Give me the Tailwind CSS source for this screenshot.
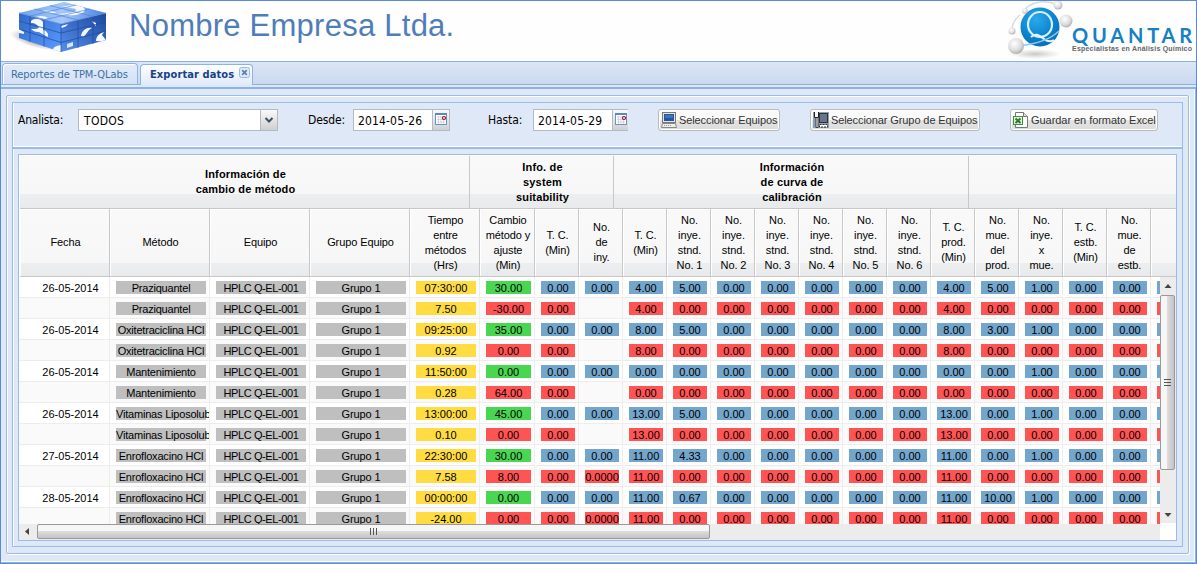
<!DOCTYPE html>
<html lang="es">
<head>
<meta charset="utf-8">
<title>Exportar datos</title>
<script src="https://cdn.jsdelivr.net/npm/@tailwindcss/browser@4"></script>
</head>
<body class="w-[1197px] h-[564px] overflow-hidden font-['Liberation_Sans',Arial,sans-serif] text-[11px] text-black">
<div class="flex flex-col w-full h-full border border-[#5a8bd6] bg-[#dfe8f6]">
  <header class="h-[60px] shrink-0 bg-[#fefefe] flex justify-between">
    <div class="flex">
      <svg class="w-[110px] h-[60px] shrink-0" viewBox="1 1 110 60">
        <defs>
          <linearGradient id="lf" x1="0" y1="0" x2="1" y2="1"><stop offset="0" stop-color="#2f69c8"/><stop offset="1" stop-color="#5b9aff"/></linearGradient>
          <linearGradient id="rf" x1="0" y1="1" x2="1" y2="0"><stop offset="0" stop-color="#558fee"/><stop offset="1" stop-color="#1c479d"/></linearGradient>
          <linearGradient id="tf" x1="0" y1="0" x2="1" y2="0"><stop offset="0" stop-color="#6ea2ee"/><stop offset=".5" stop-color="#a5c8fa"/><stop offset="1" stop-color="#4b83dd"/></linearGradient>
          <radialGradient id="sh"><stop offset="0" stop-color="#555" stop-opacity=".8"/><stop offset="1" stop-color="#777" stop-opacity="0"/></radialGradient>
          <clipPath id="cl"><path d="M19 13L61 24V52L19 38z"/></clipPath>
          <clipPath id="cr"><path d="M61 24L106 13V40L61 52z"/></clipPath>
          <clipPath id="ct"><path d="M19 13L64 2L106 13L61 24z"/></clipPath>
        </defs>
        <ellipse cx="37" cy="40" rx="28" ry="8" fill="url(#sh)" transform="rotate(14 37 40)"/>
        <path d="M19 13L61 24V52L19 38z" fill="url(#lf)"/>
        <path d="M61 24L106 13V40L61 52z" fill="url(#rf)"/>
        <path d="M19 13L64 2L106 13L61 24z" fill="url(#tf)"/>
        <g clip-path="url(#cl)" fill="#f4f9ff"><path d="M31 21c3-3 9-3 12 1v8c2 0 4 2 5 4v3l-4-2c-2-1-4-3-6-3c-3 0-5-1-7-3c3 0 6 0 8-1c-1-3-4-5-8-5z"/><path d="M19 29l5 3v2l-5-1zM53 50c0-3 3-4 8-5v8z"/></g>
        <g clip-path="url(#cr)" fill="#f4f9ff"><path d="M81 36c1-6 6-9 11-8c-4 2-4 4-6 6c-1 2-3 3-5 2zM96 41c0-5 4-8 8-9l-2 3l4 5v2zM92 21l4 2v3l-3-3z"/><path d="M61 26l7-2c-1 2-3 3-7 4z"/><path d="M67 44l6-2v4l-6 2z" fill="#d6e7ff"/></g>
        <g clip-path="url(#ct)" fill="#f4f9ff"><path d="M62 7c8-3 23-2 23 3c-2 6-16 6-27 4c8-1 17-1 18-4c0-2-6-2-14-3zM42 11c5-1 12 0 14 2l-9 0z"/><path d="M36 17c5-2 9-1 12 1l-3 1z"/></g>
        <g fill="none" stroke="#1c4a9c" stroke-width=".7"><path d="M30 16V42M44 20V46.500M61 24V52M78 20V48M93 16.500V44M19 21L61 33L106 22M19 29L61 42.500L106 31"/></g>
        <g fill="none" stroke="#5387d8" stroke-width=".7"><path d="M19 13L61 24L106 13M30 16L76 5M44 20L90 9M34 9L78 20M50 5.500L93 16.500"/></g>
      </svg>
      <h1 class="pl-[18px] pt-[7px] text-[31px] leading-[36px] tracking-[0.25px] text-[#4e7dba] whitespace-nowrap">Nombre Empresa Ltda.</h1>
    </div>
    <div class="flex relative w-[194px]">
      <svg class="w-[80px] h-[60px] shrink-0" viewBox="1002 1 80 60">
        <defs>
          <radialGradient id="ball" cx=".4" cy=".3" r=".75"><stop offset="0" stop-color="#2ba9ea"/><stop offset=".6" stop-color="#0c85d0"/><stop offset="1" stop-color="#0a6bb5"/></radialGradient>
          <radialGradient id="gb" cx=".4" cy=".35" r=".7"><stop offset="0" stop-color="#fff"/><stop offset=".6" stop-color="#ddd"/><stop offset="1" stop-color="#aaa"/></radialGradient>
        </defs>
        <ellipse cx="1035" cy="54" rx="26" ry="5" fill="url(#sh)" opacity=".4"/>
        <path d="M1025 9C1036-1 1050 1 1057 5M1012 30c0-6 3-11 8-15" fill="none" stroke="#d6dadd" stroke-width="1.500"/>
        <circle cx="1066" cy="21" r="6.500" fill="url(#gb)"/>
        <circle cx="1040" cy="27" r="19.500" fill="url(#ball)"/>
        <ellipse cx="1040" cy="24.500" rx="12" ry="12.500" fill="none" stroke="#d7f0ff" stroke-width="2.200"/>
        <path d="M1031 37c5-5 9-1 13 2c4 3 7 3 10 1" fill="none" stroke="#e4f4fd" stroke-width="2"/>
        <path d="M1019 46c17-2 32-7 40-15" fill="none" stroke="#8fc9ec" stroke-width="1.500"/>
        <circle cx="1016" cy="46" r="8" fill="url(#gb)"/><circle cx="1012" cy="31" r="3.500" fill="url(#gb)"/><circle cx="1025" cy="11" r="2.800" fill="url(#gb)"/><circle cx="1058" cy="5" r="4.500" fill="url(#gb)"/>
      </svg>
      <div class="absolute left-[70px] top-[24px] w-[122px] whitespace-nowrap">
        <div class="font-['Lato',sans-serif] font-bold text-[20px] leading-[20px] tracking-[3.8px] text-[#1580c4]">QUANTAR</div>
        <div class="text-[7px] leading-[8px] font-bold tracking-[0.22px] text-[#666]">Especialistas en Análisis Químico</div>
      </div>
    </div>
  </header>

  <nav class="h-[24px] shrink-0 border-t border-b border-t-[#8db2e6] border-b-[#8db2e6] bg-linear-to-b from-[#dbe5f5] to-[#cbd9ef] flex items-end pl-px gap-[2px] font-['DejaVu_Sans_Condensed','DejaVu_Sans',sans-serif] font-stretch-condensed">
    <div class="w-[136px] h-[21px] border border-b-0 border-[#8db2e3] rounded-t-[4px] bg-linear-to-b from-[#e2ecfa] to-[#d3e1f5] shadow-[inset_1px_1px_0_#fff] text-[#416da3] pl-[8px] leading-[21px] text-[11px] tracking-[-0.06px] whitespace-nowrap">Reportes de TPM-QLabs</div>
    <div class="relative w-[113px] h-[21px] -mb-px border border-b-0 border-[#8db2e3] rounded-t-[4px] bg-linear-to-b from-white to-[#e0eaf8] text-[#15428b] font-bold pl-[9px] leading-[20px] text-[11px] tracking-[0.1px] whitespace-nowrap">Exportar datos
      <svg class="absolute right-[2px] top-[2px] w-[11px] h-[11px]" viewBox="0 0 11 11"><rect x=".5" y=".5" width="10" height="10" rx="2" fill="#dfeafa" stroke="#9ab8e0"/><path d="M3.200 3.200l4.600 4.600M7.800 3.200l-4.600 4.600" stroke="#5f80b0" stroke-width="1.700"/></svg>
    </div>
  </nav>
  <div class="h-[4px] shrink-0 border-b-2 border-[#8db2e6] bg-[#dfe8f6]"></div>

  <main class="flex-1 min-h-0 pt-[6px] pb-[8px] pl-[5px] pr-[6px] border-r border-b border-[#8db2e6] flex shadow-[inset_-1px_-1px_0_#fff]">
    <section class="flex-1 flex flex-col min-w-0 border border-[#99bce8] rounded-[2px] shadow-[inset_1px_1px_0_#fff,1px_1px_0_#fff] pt-[6px] pl-[5px] pr-[5px] pb-[6px]">
      <form class="h-[45px] shrink-0 border border-[#99bce8] border-b-0 shadow-[inset_0_-1px_0_#fff,inset_1px_0_0_#fff] flex pt-[6px] pl-[5px] font-['DejaVu_Sans_Condensed','DejaVu_Sans',sans-serif] font-stretch-condensed text-[12px]">
        <label class="w-[60px] leading-[22px] tracking-[-0.2px]">Analista:</label>
        <div class="w-[200px] h-[22px] border border-[#b5b8c8] bg-white flex justify-between leading-[22px] pl-[5px] tracking-[0.3px]">TODOS
          <svg class="w-[17px] h-[20px] border-l border-[#b5b8c8] bg-linear-to-b from-[#fafafa] to-[#cfcfcf]" viewBox="0 0 16 20"><path d="M4.500 8l3.500 3.500l3.500-3.500" fill="none" stroke="#3e4e6c" stroke-width="2"/></svg>
        </div>
        <label class="ml-[30px] w-[45px] leading-[22px] tracking-[-0.1px]">Desde:</label>
        <div class="w-[97px] h-[22px] border border-[#b5b8c8] bg-white flex justify-between leading-[22px] pl-[4px] tracking-[0.15px]">2014-05-26
          <svg class="w-[17px] h-[20px] border-l border-[#b5b8c8] bg-linear-to-b from-[#fafafa] to-[#cfcfcf]" viewBox="0 0 16 20"><rect x="2.500" y="3.500" width="11" height="11" fill="#fff" stroke="#6b93c6"/><path d="M2 4h12" stroke="#5d87bd" stroke-width="2"/><path d="M4 7h8M4 9.500h8M4 12h8M5.500 6v8M8 6v8M10.500 6v8" stroke="#c9d0da" stroke-width=".8"/><circle cx="11" cy="8" r="1.500" fill="#fff" stroke="#8e1326" stroke-width="1.200"/></svg>
        </div>
        <label class="ml-[38px] w-[45px] leading-[22px] tracking-[-0.1px]">Hasta:</label>
        <div class="w-[95px] h-[22px] border border-r-0 border-[#b5b8c8] bg-white flex justify-between leading-[22px] pl-[4px] tracking-[0.15px]">2014-05-29
          <svg class="w-[16px] h-[20px] border-l border-[#b5b8c8] bg-linear-to-b from-[#fafafa] to-[#cfcfcf]" viewBox="0 0 15 20"><rect x="2.500" y="3.500" width="11" height="11" fill="#fff" stroke="#6b93c6"/><path d="M2 4h12" stroke="#5d87bd" stroke-width="2"/><path d="M4 7h8M4 9.500h8M4 12h8M5.500 6v8M8 6v8M10.500 6v8" stroke="#c9d0da" stroke-width=".8"/><circle cx="11" cy="8" r="1.500" fill="#fff" stroke="#8e1326" stroke-width="1.200"/></svg>
        </div>
        <button type="button" class="ml-[30px] w-[122px] h-[22px] border border-[#bbb] rounded-[3px] bg-linear-to-b from-[#fafafa] from-50% via-[#e4e4e4] via-50% to-[#dcdcdc] shadow-[inset_0_0_0_1px_#fff] flex items-center pl-[2px] gap-[2px] font-['Liberation_Sans',Arial,sans-serif] font-stretch-normal text-[#333] text-[11px] whitespace-nowrap tracking-[-0.1px]">
          <svg class="w-[16px] h-[16px] shrink-0" viewBox="0 0 16 16"><rect x="1.500" y=".5" width="13" height="10" fill="#e6e6e6" stroke="#777"/><rect x="3" y="2" width="10" height="7" fill="#28569b"/><rect x="4" y="3" width="8" height="3" fill="#4274b8"/><path d="M1.500 11.500h13l1 4H.5z" fill="#eee" stroke="#888"/><path d="M3 13.500h8" stroke="#999" stroke-dasharray="1 1"/></svg>Seleccionar Equipos</button>
        <button type="button" class="ml-[30px] w-[170px] h-[22px] border border-[#bbb] rounded-[3px] bg-linear-to-b from-[#fafafa] from-50% via-[#e4e4e4] via-50% to-[#dcdcdc] shadow-[inset_0_0_0_1px_#fff] flex items-center pl-[2px] gap-[2px] font-['Liberation_Sans',Arial,sans-serif] font-stretch-normal text-[#333] text-[11px] whitespace-nowrap tracking-[-0.1px]">
          <svg class="w-[16px] h-[16px] shrink-0" viewBox="0 0 16 16"><rect width="16" height="16" fill="#8ea0b5"/><rect x="6.500" y="1.500" width="8" height="9" fill="#66758a" stroke="#333"/><path d="M1.500 0v5.500h4V0" fill="#f4f4f4" stroke="#222"/><path d="M3 6v9.500h2V6" fill="#f4f4f4" stroke="#222" stroke-width=".8"/><rect x="6.500" y="12.500" width="8" height="2.500" fill="#fff" stroke="#333" stroke-dasharray="2 1"/></svg>Seleccionar Grupo de Equipos</button>
        <button type="button" class="ml-[30px] w-[148px] h-[22px] border border-[#bbb] rounded-[3px] bg-linear-to-b from-[#fafafa] from-50% via-[#e4e4e4] via-50% to-[#dcdcdc] shadow-[inset_0_0_0_1px_#fff] flex items-center pl-[2px] gap-[2px] font-['Liberation_Sans',Arial,sans-serif] font-stretch-normal text-[#333] text-[11px] whitespace-nowrap tracking-[-0.05px]">
          <svg class="w-[16px] h-[16px] shrink-0" viewBox="0 0 16 16"><path d="M2.500.5h8l4 4v11h-12z" fill="#fcfcfc" stroke="#777"/><path d="M10.500.5v4h4" fill="#ddd" stroke="#777"/><rect x=".5" y="4.500" width="9" height="8" fill="#dff0dc" stroke="#3d9140"/><path d="M2.500 6.500l5 4.500M7.500 6.500l-5 4.500" stroke="#2c7a31" stroke-width="2"/></svg>Guardar en formato Excel</button>
      </form>

      <div class="flex-1 min-h-0 border-t-2 border-x border-b border-[#99bce8] shadow-[inset_1px_0_0_#fff] pt-[5px] px-[5px] pb-[5px] flex">
        <div class="flex-1 min-w-0 flex flex-col border border-[#99bce8] bg-white overflow-hidden">
          <div class="flex h-[53px] shrink-0 ml-px mt-px bg-[linear-gradient(#f9f9f9_0%,#f7f7f7_74%,#eceef0_74%,#e8eaec_100%)] border-b border-[#c8c8c8] font-bold leading-[15px] text-center tracking-[0.15px]">
            <div class="w-[450px] shrink-0 border-r border-[#c8c8c8] flex items-center justify-center pl-[2px]">Información de<br>cambio de método</div>
            <div class="w-[144px] shrink-0 border-r border-[#c8c8c8] flex items-center justify-center pl-[2px] pt-px">Info. de<br>system<br>suitability</div>
            <div class="w-[355px] shrink-0 border-r border-[#c8c8c8] flex items-center justify-center pl-[2px] pt-px">Información<br>de curva de<br>calibración</div>
          </div>
          <div id="cols" class="flex h-[68px] shrink-0 ml-px border-b border-[#c8c8c8] leading-[15px] text-center"></div>
          <div class="flex flex-1 min-h-0">
            <div class="w-[1141px] shrink-0 flex flex-col">
              <div id="rows" class="h-[247px] shrink-0 overflow-hidden"></div>
              <div class="h-[16px] bg-[#ececec] flex">
                <svg class="w-[18px] h-[16px]" viewBox="0 0 18 16"><path d="M10 4v7l-4-3.500z" fill="#444"/></svg>
                <div class="w-[673px] h-[15px] border border-[#999] rounded-[2px] bg-linear-to-b from-[#f6f6f6] from-45% via-[#dcdcdc] via-50% to-[#c4c4c8] flex justify-center items-center gap-[2px]">
                  <i class="w-px h-[7px] bg-[#555]"></i><i class="w-px h-[7px] bg-[#555]"></i><i class="w-px h-[7px] bg-[#555]"></i>
                </div>
              </div>
            </div>
            <div class="w-[16px] h-[246px] bg-[#ececec] flex flex-col">
              <svg class="w-[16px] h-[18px]" viewBox="0 0 16 18"><path d="M4.500 11h7l-3.500-4z" fill="#444"/></svg>
              <div class="w-[15px] h-[175px] border border-[#999] rounded-[2px] bg-linear-to-r from-[#f6f6f6] from-45% via-[#dcdcdc] via-50% to-[#c4c4c8] flex flex-col justify-center items-center gap-[2px]">
                <i class="h-px w-[7px] bg-[#555]"></i><i class="h-px w-[7px] bg-[#555]"></i><i class="h-px w-[7px] bg-[#555]"></i>
              </div>
              <svg class="mt-auto w-[16px] h-[18px]" viewBox="0 0 16 18"><path d="M4.500 8h7l-3.500 4z" fill="#444"/></svg>
            </div>
          </div>
        </div>
      </div>
    </section>
  </main>
</div>
<script>
const W90='w-[90px]', W100='w-[100px]', W70='w-[70px]', W55='w-[55px]', W44='w-[44px]';
const columns=[['Fecha',W90],['Método',W100],['Equipo',W100],['Grupo Equipo',W100],['Tiempo<br>entre<br>métodos<br>(Hrs)',W70],['Cambio<br>método y<br>ajuste<br>(Min)',W55],['T. C.<br>(Min)',W44],['No.<br>de<br>iny.',W44],['T. C.<br>(Min)',W44],
 ...[1,2,3,4,5,6].map(n=>['No.<br>inye.<br>stnd.<br>No. '+n,W44]),
 ['T. C.<br>prod.<br>(Min)',W44],['No.<br>mue.<br>del<br>prod.',W44],['No.<br>inye.<br>x<br>mue.',W44],['T. C.<br>estb.<br>(Min)',W44],['No.<br>mue.<br>de<br>estb.',W44]];
const hbg=' bg-[linear-gradient(#f9f9f9_0%,#f7f7f7_80%,#eceef0_80%,#e8eaec_100%)] shadow-[inset_1px_1px_0_#fff]';
document.getElementById('cols').innerHTML=columns.map(([t,w])=>
 `<div class="${w} shrink-0 border-r border-[#c8c8c8] flex items-center justify-center pl-[2px] tracking-[-0.1px] whitespace-nowrap${hbg}"><span>${t}</span></div>`).join('')+`<div class="flex-1${hbg}"></div>`;
const z=n=>Array(n).fill('0.00');
const data=[
 ['26-05-2014','Praziquantel','07:30:00','30.00','0.00','4.00','5.00','4.00','5.00'],
 ['','Praziquantel','7.50','-30.00','','4.00','','4.00'],
 ['26-05-2014','Oxitetraciclina HCl','09:25:00','35.00','0.00','8.00','5.00','8.00','3.00'],
 ['','Oxitetraciclina HCl','0.92','0.00','','8.00','','8.00'],
 ['26-05-2014','Mantenimiento','11:50:00','0.00','0.00','0.00','0.00','0.00','0.00'],
 ['','Mantenimiento','0.28','64.00','','0.00','','0.00'],
 ['26-05-2014','Vitaminas Liposolubles','13:00:00','45.00','0.00','13.00','5.00','13.00','0.00'],
 ['','Vitaminas Liposolubles','0.10','0.00','','13.00','','13.00'],
 ['27-05-2014','Enrofloxacino HCl','22:30:00','30.00','0.00','11.00','4.33','11.00','0.00'],
 ['','Enrofloxacino HCl','7.58','8.00','0.0000','11.00','','11.00'],
 ['28-05-2014','Enrofloxacino HCl','00:00:00','0.00','0.00','11.00','0.67','11.00','10.00'],
 ['','Enrofloxacino HCl','-24.00','0.00','0.0000','11.00','','11.00']];
const cell=(w,c,t,x='')=>`<div class="${w} shrink-0 h-full border-r border-[#ededed] pl-[6px] pr-[3px] pt-[4px] overflow-hidden">${t===''?'':`<div class="h-[13px] leading-[14px] text-center whitespace-nowrap ${c} ${x}">${t}</div>`}</div>`;
document.getElementById('rows').innerHTML=data.map((r,i)=>{
 const odd=i%2, num=odd?'bg-[#ff5454]':'bg-[#73a6cd]', g='bg-[#bfbfbf]';
 const tail=odd?[r[5],...z(6),r[7],...z(4)]:[r[5],r[6],...z(5),r[7],r[8],'1.00','0.00','0.00'];
 return `<div class="flex w-[1160px] h-[21px] border-b border-[#ededed] ${odd?'bg-[#fafafa]':'bg-white'}">`
 +cell('w-[91px]','pl-[10px]',r[0])
 +cell(W100,g,r[1],'tracking-[-0.2px]')+cell(W100,g,'HPLC Q-EL-001','tracking-[-0.4px]')+cell(W100,g,'Grupo 1','tracking-[-0.1px]')
 +cell(W70,'bg-[#ffdc41]',r[2])+cell(W55,odd?num:'bg-[#49d651]',r[3])+cell(W44,num,'0.00')+cell(W44,num,r[4])
 +tail.map(t=>cell(W44,num,t)).join('')+cell(W44,num,'&nbsp;')+'</div>';
}).join('');
</script>
</body>
</html>
